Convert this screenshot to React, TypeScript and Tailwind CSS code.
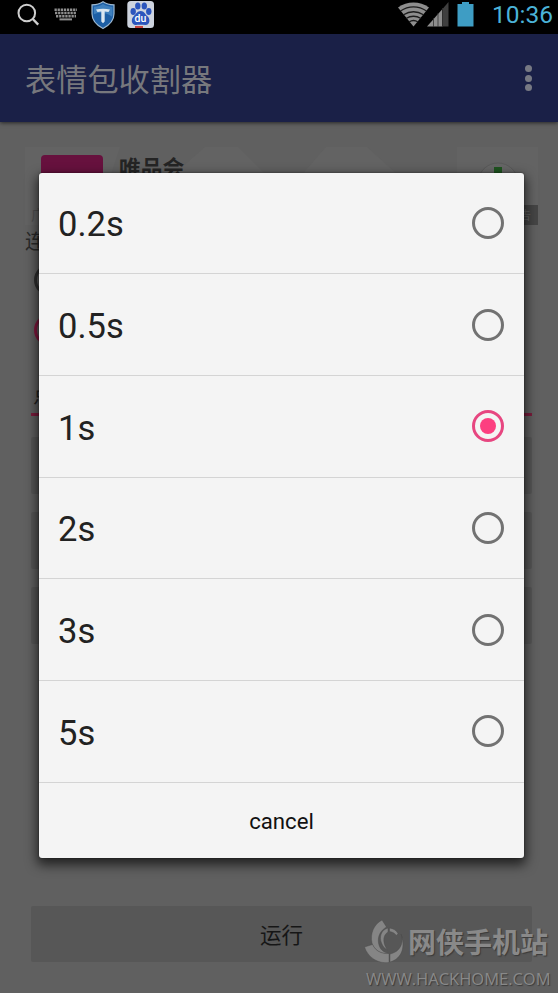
import clsx from "clsx"
import { useState } from "react"

const INTERVALS = ["0.2s", "0.5s", "1s", "2s", "3s", "5s"]

const StatusBar = () => {
  return (
    <div className="flex h-[34px] shrink-0 items-start bg-black">
      <svg viewBox="0 0 180 34" className="h-[34px] w-[180px]">
        <g fill="none" stroke="#cfcfcf">
          <circle cx="26.8" cy="13" r="8.3" strokeWidth="2" />
          <path d="M32.8 19l5.4 5.6" strokeWidth="2.4" />
        </g>
        <g stroke="#8f8f8f" strokeWidth="2.5" strokeDasharray="2.3 0.8">
          <path d="M54.5 9.8h22.5M55 13h21.5M56 16.2h20" />
          <path d="M59.500 19.4h12.500" strokeWidth="2" strokeDasharray="none" />
        </g>
        <path
          d="M103 1.8c3.2 2.3 7 3 11 3v9c0 7-4.800 11.500-11 14.700-6.200-3.200-11-7.700-11-14.700v-9c4 0 7.800-.7 11-3z"
          fill="#1d5fa5"
          stroke="#9fb9cf"
          strokeWidth="1.2"
        />
        <path d="M103 4c2.800 1.800 6 2.600 9.500 2.700v7c0 1-.2 2-.5 3-5-4-12-5-18-2.500v-7.500c3.300-.1 6.200-.9 9-2.700z" fill="#3f80bd" />
        <path d="M96 9.500c4.500-1 9.500-1 14 0l-1.500 2.500-3.800-.4v9.900l-1.700 1.700-1.700-1.700v-9.900l-3.800.4z" fill="#dbe7f0" />
        <rect x="127.300" y="1" width="26.700" height="27" rx="3.500" fill="#cdd3de" />
        <g fill="#2b55bd">
          <ellipse cx="133.200" cy="11.500" rx="2.700" ry="3.400" />
          <ellipse cx="137.800" cy="6" rx="2.700" ry="3.500" />
          <ellipse cx="144.300" cy="6" rx="2.700" ry="3.500" />
          <ellipse cx="148.800" cy="11.500" rx="2.700" ry="3.400" />
          <path d="M140.800 11c3.200 0 4.200 3 6.400 5 3.300 2.400 3 9-1.700 9-3 0-6.500-.3-9.500 0-4.500.3-5.500-6-2.300-8.800 2.300-2.200 3.700-5.200 7.100-5.200z" />
        </g>
        <rect x="135" y="26" width="8" height="2" fill="#c5443f" />
        <text x="140.400" y="22.300" textAnchor="middle" fontSize="10.500" fontWeight="500" fill="#fff" className="font-['Roboto',sans-serif]">
          du
        </text>
      </svg>
      <svg viewBox="0 0 80 34" className="ml-auto h-[34px] w-[80px]">
        <path d="M0 7.500C9 0.800 22 0.800 31 7.500L15.500 26.500z" fill="#8e8e8e" />
        <g fill="none" stroke="#1c1c1c" strokeWidth="1.300">
          <path d="M2.500 11c8-5.500 18-5.500 26 0" />
          <path d="M5.500 14.800c6.500-4 13.500-4 20 0" />
          <path d="M8 18.500c5-3 10-3 15 0" />
          <path d="M11 22c3-2 6-2 9 0" />
        </g>
        <path d="M29 26.500L44 9.500v17z" fill="#8e8e8e" />
        <path d="M44.500 9l6-7v24.500h-6z" fill="#3f3f3f" />
        <path d="M35.500 18v9M40 13v14M44.500 8v19" stroke="#333" strokeWidth=".8" />
        <path d="M59.500 4H64V2h7v2h4.500v22.500h-16z" fill="#3e9dc4" />
      </svg>
      <span className="ml-[14px] w-[66px] font-['Roboto',sans-serif] text-[24.5px] leading-[30px] text-[#4bb3d8]">
        10:36
      </span>
    </div>
  )
}

const Toolbar = () => {
  return (
    <header className="z-10 flex h-[88px] shrink-0 items-center justify-between bg-[#1a2047] pr-[26px] pl-[25px] shadow-[0_1px_4px_rgba(0,0,0,0.6)]">
      <h1 className="pb-px text-[31.2px] leading-none text-[#77787d]">表情包收割器</h1>
      <div className="flex flex-col gap-[2.500px]">
        <span className="size-[7px] rounded-full bg-[#777983]" />
        <span className="size-[7px] rounded-full bg-[#777983]" />
        <span className="size-[7px] rounded-full bg-[#777983]" />
      </div>
    </header>
  )
}

const AdBanner = () => {
  return (
    <div className="relative ml-[25px] flex h-[78px] w-[513px] items-start overflow-hidden bg-[#636363]">
      <svg viewBox="0 0 513 78" className="absolute inset-0 size-full">
        <path d="M95 0h85l-34 30H85zM213 0h88l-26 30h-32zM342 0h90v30H375z" fill="#606060" />
        <circle cx="473" cy="36" r="20" fill="#666" stroke="#5a5a5a" />
        <path d="M469 20h8v20h-8z" fill="#1f5420" />
      </svg>
      <div className="relative mt-2 ml-4 h-[62px] w-[62px] rounded-sm bg-[#67113e]" />
      <span className="relative mt-[8px] ml-4 text-[21.800px] leading-6 font-bold text-[#242424]">唯品会</span>
      <span className="absolute bottom-1 left-[6px] text-[14px] leading-none text-[#505050]">广</span>
      <span className="absolute right-0 bottom-0 h-5 w-9 bg-[#454545] pr-[7px] text-right text-[12px] leading-5 text-[#646464]">
        告
      </span>
    </div>
  )
}

const Watermark = () => {
  return (
    <div className="absolute right-[6px] bottom-[4px] w-[188px] text-[#898989] [text-shadow:1px_1px_1px_#3a3a3a]">
      <div className="flex items-center">
        <svg viewBox="0 0 42 46" className="h-[46px] w-[42px] shrink-0">
          <g fill="#858585" stroke="#484848" strokeWidth=".4">
            <path d="M18 2l4.500 7c-6 3.500-9 9-8 16 1.200 6.500 5 9.500 10.500 10.500-9 1-15-4-17-10.500C6 16 9.500 6.500 18 2z" />
            <path d="M0.500 29l8-2.500c3 6.500 9 9.500 16.500 9v9C14 46 4 39.500 0.500 29z" />
            <path d="M26 36c7-1.500 11-6 12-12 .5-3.500 0-5.500-1-8 4.500 12 1.500 24.500-11 28z" />
            <path d="M25.500 10c4 .5 7 2.500 8.500 5.500l-1.500 2c-2-2.500-4-3.500-7-4z" />
            <path d="M24 10c-7 2-9 9-6.500 15 1.500 4 3.500 5.500 6 7-4-5-6-14 .5-18z" />
          </g>
        </svg>
        <span className="ml-[2px] text-[28px] leading-none font-bold whitespace-nowrap">网侠手机站</span>
      </div>
      <p className="mt-[5px] pl-[2px] font-['Open_Sans',sans-serif] text-[16.500px] leading-5 font-medium whitespace-nowrap">
        WWW.HACKHOME.COM
      </p>
    </div>
  )
}

interface RadioProps {
  checked: boolean
}

const Radio = ({ checked }: RadioProps) => {
  return (
    <span
      className={clsx(
        "flex size-8 items-center justify-center rounded-full border-3",
        checked ? "border-[#e74680]" : "border-[#727272]"
      )}
    >
      {checked && <span className="size-4 rounded-full bg-[#fc3f80]" />}
    </span>
  )
}

const IntervalDialog = () => {
  const [selected, setSelected] = useState("1s")

  return (
    <div
      role="dialog"
      className="absolute top-[172.5px] left-[39px] z-20 flex h-[685.5px] w-[485px] flex-col rounded-[3px] bg-[#f4f4f4] font-['Roboto',sans-serif] shadow-[0_5px_12px_2px_rgba(0,0,0,0.65),0_0_2px_rgba(0,0,0,0.5)]"
    >
      {INTERVALS.map((interval) => (
        <button
          key={interval}
          type="button"
          onClick={() => setSelected(interval)}
          className="flex h-[101.700px] shrink-0 items-center justify-between border-b border-[#d4d4d4] pr-5 pl-[19px]"
        >
          <span className="pt-[3px] text-[34.500px] leading-10 text-[#222]">{interval}</span>
          <Radio checked={selected === interval} />
        </button>
      ))}
      <button type="button" className="flex-1 pt-px text-[22.200px] leading-7 text-[#111]">
        cancel
      </button>
    </div>
  )
}

const App = () => {
  return (
    <div className="relative flex h-[993px] w-[558px] flex-col overflow-hidden bg-[#606060] font-['Noto_Sans_CJK_SC',sans-serif]">
      <StatusBar />
      <Toolbar />

      <main className="flex flex-1 flex-col pt-[25px]">
        <AdBanner />
        <p className="mt-1 ml-[25px] text-[20px] leading-[24px] text-[#292929]">连</p>
        <span className="mt-[11px] ml-[34px] size-8 rounded-full border-3 border-[#303030]" />
        <span className="mt-[18px] ml-[34px] size-8 rounded-full border-3 border-[#85173f]" />
        <div className="mt-[34px] mr-[26px] ml-[31px] flex h-[36px] items-center border-b-3 border-[#7b1c3c] pb-2 pl-0.5 text-[22px] text-[#242424]">
          点
        </div>
        <div className="mt-[21px] mr-[26px] ml-[31px] flex flex-col gap-[18px]">
          <div className="h-[57px] rounded-xs bg-[#575757]" />
          <div className="h-[57px] rounded-xs bg-[#575757]" />
          <div className="h-[57px] rounded-xs bg-[#575757]" />
        </div>
        <button
          type="button"
          className="mt-auto mr-[26px] mb-[31px] ml-[31px] h-[56px] rounded-xs bg-[#575757] text-[21.500px] text-[#161616]"
        >
          运行
        </button>
      </main>

      <Watermark />
      <IntervalDialog />
    </div>
  )
}

export default App
